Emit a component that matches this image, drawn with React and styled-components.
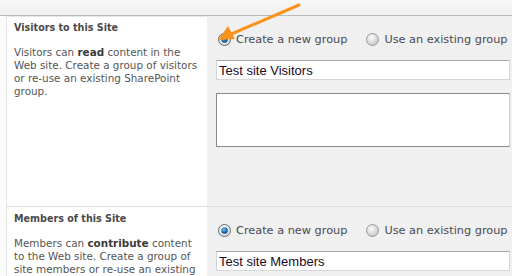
import React from 'react';
import styled, { createGlobalStyle } from 'styled-components';

const GlobalStyle = createGlobalStyle`
  html, body {
    margin: 0;
    padding: 0;
    background: #ffffff;
  }
  body {
    width: 512px;
    height: 276px;
    overflow: hidden;
  }
`;

const sections = [
  {
    title: 'Visitors to this Site',
    lines: [
      ['Visitors can ', 'read', ' content in the'],
      ['Web site. Create a group of visitors'],
      ['or re-use an existing SharePoint'],
      ['group.'],
    ],
    value: 'Test site Visitors',
    withBox: true,
  },
  {
    title: 'Members of this Site',
    lines: [
      ['Members can ', 'contribute', ' content'],
      ['to the Web site. Create a group of'],
      ['site members or re-use an existing'],
    ],
    value: 'Test site Members',
    withBox: false,
  },
];

const Radio = ({ checked }) => (
  <RadioMark width="13" height="13" viewBox="0 0 13 13">
    <defs>
      <radialGradient id={checked ? 'rg-on' : 'rg-off'} cx="0.4" cy="0.35" r="0.7">
        <stop offset="0" stopColor={checked ? '#ffffff' : '#fbfbfb'} />
        <stop offset="1" stopColor={checked ? '#d6d6d6' : '#c4c4c4'} />
      </radialGradient>
      <radialGradient id="dot" cx="0.4" cy="0.35" r="0.7">
        <stop offset="0" stopColor="#7fc6f2" />
        <stop offset="0.6" stopColor="#1b6fb3" />
        <stop offset="1" stopColor="#0b3f73" />
      </radialGradient>
    </defs>
    <circle cx="6.5" cy="6.5" r="6" fill={`url(#${checked ? 'rg-on' : 'rg-off'})`} stroke={checked ? '#5f6a73' : '#9a9a9a'} />
    {checked && <circle cx="6.5" cy="6.5" r="3.2" fill="url(#dot)" />}
  </RadioMark>
);

const App = () => (
  <>
    <GlobalStyle />
    <Page>
      <TopBar />
      <Body>
        <Gutter />
        <Sections>
          {sections.map((s) => (
            <Section key={s.title}>
              <Description>
                <Heading>{s.title}</Heading>
                <Text>
                  {s.lines.map((parts, i) => (
                    <Line key={i}>
                      {parts.map((p, j) => (j === 1 ? <b key={j}>{p}</b> : <span key={j}>{p}</span>))}
                    </Line>
                  ))}
                </Text>
              </Description>
              <Controls>
                <RadioRow>
                  <Option>
                    <Radio checked />
                    Create a new group
                  </Option>
                  <Option>
                    <Radio />
                    Use an existing group
                  </Option>
                </RadioRow>
                <NameInput>{s.value}</NameInput>
                {s.withBox && <TextBox />}
              </Controls>
            </Section>
          ))}
        </Sections>
      </Body>
      <Arrow width="90" height="45" viewBox="0 0 90 45">
        <line x1="84" y1="2" x2="14" y2="32" stroke="#f7931e" strokeWidth="3" strokeLinecap="round" />
        <polygon points="3,37 13,23 20,36" fill="#f7931e" />
      </Arrow>
    </Page>
  </>
);

const Page = styled.div`
  position: relative;
  width: 512px;
  height: 276px;
  overflow: hidden;
  background: #ffffff;
`;

const TopBar = styled.div`
  height: 15px;
  background: linear-gradient(#f7f7f7, #f1f1f1);
  border-bottom: 1px solid #b9b9b9;
  box-shadow: 0 1px 0 #e6e6e6;
`;

const Body = styled.div`
  display: flex;
`;

const Gutter = styled.div`
  width: 6px;
  border-right: 1px solid #e2e2e2;
  background: #fbfbfb;
`;

const Sections = styled.div`
  flex: 1;
  display: flex;
  flex-direction: column;
`;

const Section = styled.div`
  display: grid;
  grid-template-columns: 200px 1fr;
  border-top: 1px solid #dcdcdc;
  &:first-child {
    border-top: none;
    height: 190px;
  }
`;

const Description = styled.div`
  padding: 5px 0 0 7px;
  font-family: 'DejaVu Sans', Verdana, sans-serif;
  color: #555555;
`;

const Heading = styled.div`
  font-size: 9.6px;
  font-weight: bold;
  line-height: 13px;
  color: #4a4a4a;
`;

const Text = styled.div`
  margin-top: 12px;
  font-size: 10.4px;
  line-height: 13px;
  b {
    color: #3a3a3a;
  }
`;

const Line = styled.div`
  white-space: nowrap;
`;

const Controls = styled.div`
  background: #f0f0f1;
  padding: 16px 2px 0 9px;
  display: flex;
  flex-direction: column;
`;

const RadioRow = styled.div`
  display: flex;
  gap: 19px;
  padding-left: 2px;
  height: 14px;
  align-items: center;
`;

const Option = styled.label`
  display: flex;
  align-items: center;
  gap: 5px;
  font-family: 'DejaVu Sans', Verdana, sans-serif;
  font-size: 11.3px;
  color: #4a4a52;
  white-space: nowrap;
`;

const RadioMark = styled.svg`
  display: block;
  flex: none;
`;

const NameInput = styled.div`
  margin-top: 14px;
  box-sizing: border-box;
  height: 20px;
  background: #ffffff;
  border: 1px solid #d6d6d8;
  border-top-color: #a8a8a8;
  padding: 2px 0 0 2px;
  font-family: 'Liberation Sans', Arial, sans-serif;
  font-size: 13px;
  line-height: 15px;
  color: #220a22;
`;

const TextBox = styled.div`
  margin-top: 13px;
  height: 54px;
  box-sizing: border-box;
  background: #ffffff;
  border: 1px solid #8a8a8e;
  border-right-color: #c8c8c8;
`;

const Arrow = styled.svg`
  position: absolute;
  left: 215px;
  top: 3px;
`;

export default App;
